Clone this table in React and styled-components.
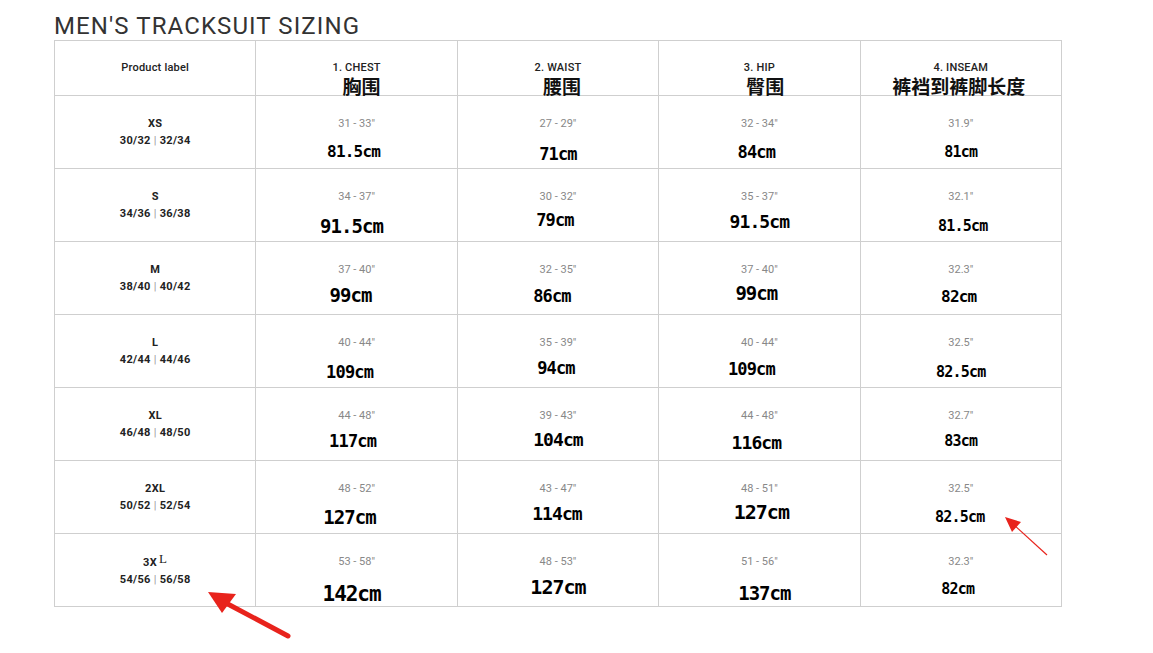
import React from "react";
import styled, { createGlobalStyle } from "styled-components";

const GlobalStyle = createGlobalStyle`
  html, body {
    margin: 0;
    padding: 0;
    background: #ffffff;
  }
  body {
    font-family: Roboto, "Liberation Sans", "Noto Sans CJK SC", sans-serif;
  }
`;

const headers = [
  { label: "1. CHEST", zh: "胸围", dx: 5 },
  { label: "2. WAIST", zh: "腰围", dx: 4 },
  { label: "3. HIP", zh: "臀围", dx: 6 },
  { label: "4. INSEAM", zh: "裤裆到裤脚长度", dx: -2 },
];

// each cell: [inch, cm, dx, cy, font size]
const rows = [
  {
    size: "XS",
    eu: "30/32 | 32/34",
    cells: [
      ['31 - 33"', "81.5cm", -3, 56, 16],
      ['27 - 29"', "71cm", 0, 58, 17],
      ['32 - 34"', "84cm", -3, 56, 17],
      ['31.9"', "81cm", 0, 56, 15],
    ],
  },
  {
    size: "S",
    eu: "34/36 | 36/38",
    cells: [
      ['34 - 37"', "91.5cm", -5, 57, 19],
      ['30 - 32"', "79cm", -3, 51, 17],
      ['35 - 37"', "91.5cm", 0, 53, 18],
      ['32.1"', "81.5cm", 2, 57, 15],
    ],
  },
  {
    size: "M",
    eu: "38/40 | 40/42",
    cells: [
      ['37 - 40"', "99cm", -6, 53, 19],
      ['32 - 35"', "86cm", -6, 54, 17],
      ['37 - 40"', "99cm", -3, 51, 19],
      ['32.3"', "82cm", -2, 55, 16],
    ],
  },
  {
    size: "L",
    eu: "42/44 | 44/46",
    cells: [
      ['40 - 44"', "109cm", -7, 57, 17],
      ['35 - 39"', "94cm", -2, 53, 17],
      ['40 - 44"', "109cm", -8, 54, 17],
      ['32.5"', "82.5cm", 0, 57, 15],
    ],
  },
  {
    size: "XL",
    eu: "46/48 | 48/50",
    cells: [
      ['44 - 48"', "117cm", -4, 53, 17],
      ['39 - 43"', "104cm", 0, 52, 18],
      ['44 - 48"', "116cm", -3, 55, 18],
      ['32.7"', "83cm", 0, 53, 15],
    ],
  },
  {
    size: "2XL",
    eu: "50/52 | 52/54",
    cells: [
      ['48 - 52"', "127cm", -7, 56, 19],
      ['43 - 47"', "114cm", -1, 53, 18],
      ['48 - 51"', "127cm", 2, 51, 20],
      ['32.5"', "82.5cm", -1, 56, 15],
    ],
  },
  {
    size: "3X",
    odd: "L",
    eu: "54/56 | 56/58",
    cells: [
      ['53 - 58"', "142cm", -5, 60, 21],
      ['48 - 53"', "127cm", 0, 53, 20],
      ['51 - 56"', "137cm", 5, 59, 19],
      ['32.3"', "82cm", -3, 55, 15],
    ],
  },
];

function SizeChart() {
  return (
    <Page>
      <Title>MEN'S TRACKSUIT SIZING</Title>
      <Table>
        <HeadCell>
          <HeadLabel>Product label</HeadLabel>
        </HeadCell>
        {headers.map((h) => (
          <HeadCell key={h.label}>
            <HeadLabel>{h.label}</HeadLabel>
            <HeadZh $dx={h.dx}>{h.zh}</HeadZh>
          </HeadCell>
        ))}

        {rows.map((r) => (
          <React.Fragment key={r.size}>
            <LabelCell>
              <SizeName>
                {r.size}
                {r.odd && <OddL>{r.odd}</OddL>}
              </SizeName>
              <EuSizes>
                {r.eu.split(" | ")[0]} <Pipe>|</Pipe> {r.eu.split(" | ")[1]}
              </EuSizes>
            </LabelCell>
            {r.cells.map(([inch, cm, dx, cy, fs], i) => (
              <DataCell key={i}>
                <Inch>{inch}</Inch>
                <Cm $dx={dx} $top={cy - 34 - fs / 2} $size={fs}>
                  {cm}
                </Cm>
              </DataCell>
            ))}
          </React.Fragment>
        ))}
      </Table>

      <Arrows width="1153" height="653" viewBox="0 0 1153 653">
        <line x1="288" y1="636" x2="224" y2="602" stroke="#e8231c" strokeWidth="5" strokeLinecap="round" />
        <polygon points="208,592 236,594 222,613" fill="#e8231c" />
        <line x1="1047" y1="555" x2="1013" y2="524" stroke="#e8231c" strokeWidth="1.2" />
        <polygon points="1005,517 1021,522 1012,532" fill="#e8231c" />
      </Arrows>
    </Page>
  );
}

export default function App() {
  return (
    <>
      <GlobalStyle />
      <SizeChart />
    </>
  );
}

const Page = styled.div`
  position: relative;
  width: 1153px;
  height: 653px;
  padding: 12px 0 0 54px;
  box-sizing: border-box;
  overflow: hidden;
`;

const Title = styled.h1`
  margin: 0;
  font-family: Roboto, "Liberation Sans", sans-serif;
  font-weight: 400;
  font-size: 24px;
  line-height: 28px;
  letter-spacing: 1.1px;
  color: #333333;
`;

const Table = styled.div`
  display: grid;
  grid-template-columns: repeat(5, 201.4px);
  grid-template-rows: 55px repeat(7, 73px);
  width: 1008px;
  border-top: 1px solid #cfcfcf;
  border-left: 1px solid #cfcfcf;
  box-sizing: border-box;
`;

const Cell = styled.div`
  border-right: 1px solid #cfcfcf;
  border-bottom: 1px solid #cfcfcf;
  display: flex;
  flex-direction: column;
  align-items: center;
  box-sizing: border-box;
  min-width: 0;
`;

const HeadCell = styled(Cell)`
  padding-top: 21px;
`;

const HeadLabel = styled.div`
  font-family: Roboto, "Liberation Sans", sans-serif;
  font-weight: 500;
  font-size: 11px;
  line-height: 12px;
  letter-spacing: 0.2px;
  color: #222222;
`;

const HeadZh = styled.div`
  margin: 2px ${(p) => -p.$dx}px 0 ${(p) => p.$dx}px;
  font-family: "Noto Sans CJK SC", sans-serif;
  font-weight: 700;
  font-size: 19px;
  line-height: 20px;
  color: #111111;
  white-space: nowrap;
`;

const LabelCell = styled(Cell)`
  padding-top: 21px;
  font-family: Roboto, "Liberation Sans", sans-serif;
  font-weight: 700;
  font-size: 11px;
  letter-spacing: 0.3px;
  color: #222222;
`;

const SizeName = styled.div`
  line-height: 14px;
`;

const OddL = styled.span`
  font-family: "Liberation Serif", serif;
  font-weight: 400;
  font-size: 13px;
  margin-left: 2px;
  position: relative;
  top: -3px;
`;

const EuSizes = styled.div`
  margin-top: 3px;
  line-height: 14px;
  white-space: nowrap;
`;

const Pipe = styled.span`
  color: #9a9a9a;
  font-weight: 400;
`;

const DataCell = styled(Cell)`
  padding-top: 22px;
`;

const Inch = styled.div`
  font-family: Roboto, "Liberation Sans", sans-serif;
  font-size: 11px;
  line-height: 12px;
  color: #888888;
`;

const Cm = styled.div`
  margin: ${(p) => p.$top}px ${(p) => -p.$dx}px 0 ${(p) => p.$dx}px;
  font-family: "DejaVu Sans Mono", "Liberation Mono", monospace;
  font-weight: 700;
  font-size: ${(p) => p.$size}px;
  line-height: ${(p) => p.$size}px;
  letter-spacing: -0.05em;
  color: #000000;
  white-space: nowrap;
`;

const Arrows = styled.svg`
  position: absolute;
  top: 0;
  left: 0;
  pointer-events: none;
`;
